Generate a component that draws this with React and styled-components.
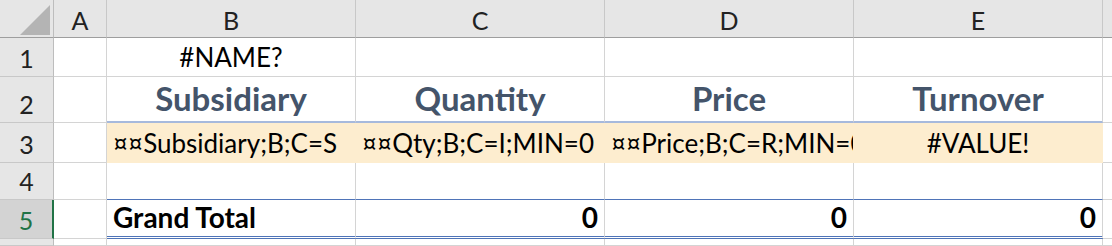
import React from "react";
import styled, { createGlobalStyle, css } from "styled-components";

const GlobalStyle = createGlobalStyle`
  html, body {
    margin: 0;
    padding: 0;
    background: #ffffff;
  }
  body {
    font-family: Lato, "Open Sans", sans-serif;
    overflow: hidden;
  }
`;

const Sheet = styled.div`
  display: grid;
  grid-template-columns: 54px 53px 249px 249px 249px 249px 1fr;
  grid-template-rows: 38px 39px 46px 40px 37px 39px 1fr;
  width: 1112px;
  height: 246px;
  overflow: hidden;
`;

const Corner = styled.div`
  background: #e6e6e6;
  border-right: 1px solid #bdbdbd;
  border-bottom: 1px solid #9e9e9e;
  box-sizing: border-box;
  display: flex;
  align-items: flex-end;
  justify-content: flex-end;
  padding: 0 3px 2px 0;
`;

const ColHead = styled.div`
  background: #e6e6e6;
  border-right: 1px solid #c8c8c8;
  border-bottom: 1px solid #9e9e9e;
  box-sizing: border-box;
  display: flex;
  align-items: center;
  justify-content: center;
  font-size: 25px;
  line-height: 1.2;
  color: #222222;
  padding-top: 2px;
`;

const RowHead = styled.div`
  background: ${(p) => (p.$selected ? "#d3d3d3" : "#e6e6e6")};
  color: ${(p) => (p.$selected ? "#217346" : "#222222")};
  border-right: ${(p) => (p.$selected ? "2px solid #217346" : "1px solid #bdbdbd")};
  border-bottom: 1px solid #c8c8c8;
  box-sizing: border-box;
  display: flex;
  align-items: flex-end;
  justify-content: center;
  font-size: 25px;
  line-height: 1.2;
  padding-bottom: 3px;
`;

const edges = {
  grid: css`
    border-bottom: 1px solid #d4d4d4;
  `,
  heading: css`
    border-bottom: 2px solid #a6b9dc;
  `,
  total: css`
    border-bottom: 1px solid #4f74b8;
  `,
  double: css`
    border-bottom: 3px double #4f74b8;
  `,
};

const Cell = styled.div`
  box-sizing: border-box;
  border-right: 1px solid ${(p) => (p.$fill ? p.$fill : "#d4d4d4")};
  ${(p) => edges[p.$edge || "grid"]}
  ${(p) =>
    p.$fill &&
    css`
      background: ${p.$fill};
      border-bottom-color: ${p.$fill};
    `}
  display: flex;
  align-items: flex-end;
  justify-content: ${(p) => p.$align || "flex-start"};
  padding: 0 6px ${(p) => (p.$bold ? "1px" : "3px")} 6px;
  overflow: hidden;
  white-space: nowrap;
  font-size: ${(p) => (p.$bold ? "28px" : "26px")};
  line-height: 1.2;
  font-weight: ${(p) => (p.$bold ? 700 : 400)};
  color: #000000;
`;

const Heading = styled(Cell)`
  color: #44546a;
  font-size: 33px;
  font-weight: 700;
  padding-bottom: 2px;
`;

const CornerMark = () => (
  <svg width="30" height="30" viewBox="0 0 30 30">
    <polygon points="0,30 30,0 30,30" fill="#b4b4b4" />
  </svg>
);

const cols = ["A", "B", "C", "D", "E", ""];
const FILL = "#fdedcf";

export default function App() {
  return (
    <>
      <GlobalStyle />
      <Sheet>
        <Corner>
          <CornerMark />
        </Corner>
        {cols.map((c, i) => (
          <ColHead key={i}>{c}</ColHead>
        ))}

        <RowHead>1</RowHead>
        <Cell />
        <Cell $align="center">#NAME?</Cell>
        <Cell />
        <Cell />
        <Cell />
        <Cell />

        <RowHead>2</RowHead>
        <Cell />
        <Heading $edge="heading" $align="center">Subsidiary</Heading>
        <Heading $edge="heading" $align="center">Quantity</Heading>
        <Heading $edge="heading" $align="center">Price</Heading>
        <Heading $edge="heading" $align="center">Turnover</Heading>
        <Cell />

        <RowHead>3</RowHead>
        <Cell />
        <Cell $fill={FILL}>¤¤Subsidiary;B;C=S</Cell>
        <Cell $fill={FILL}>¤¤Qty;B;C=I;MIN=0</Cell>
        <Cell $fill={FILL}>¤¤Price;B;C=R;MIN=0</Cell>
        <Cell $fill={FILL} $align="center">#VALUE!</Cell>
        <Cell />

        <RowHead>4</RowHead>
        <Cell />
        <Cell $edge="total" />
        <Cell $edge="total" />
        <Cell $edge="total" />
        <Cell $edge="total" />
        <Cell />

        <RowHead $selected>5</RowHead>
        <Cell />
        <Cell $edge="double" $bold>Grand Total</Cell>
        <Cell $edge="double" $bold $align="flex-end">0</Cell>
        <Cell $edge="double" $bold $align="flex-end">0</Cell>
        <Cell $edge="double" $bold $align="flex-end">0</Cell>
        <Cell />

        <RowHead />
        <Cell />
        <Cell />
        <Cell />
        <Cell />
        <Cell />
        <Cell />
      </Sheet>
    </>
  );
}
